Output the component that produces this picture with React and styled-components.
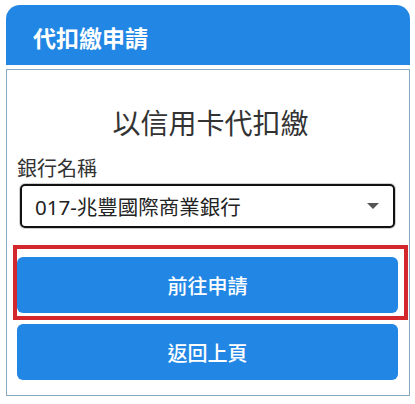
import React from "react";
import styled, { createGlobalStyle } from "styled-components";

const GlobalStyle = createGlobalStyle`
  html, body {
    margin: 0;
    padding: 0;
    background: #ffffff;
  }
  body {
    font-family: "Noto Sans", "Noto Sans CJK TC", sans-serif;
  }
`;

const Page = styled.div`
  padding: 5px 5px 8px 6px;
  width: 404px;
`;

const PanelHeader = styled.div`
  height: 60px;
  background: #2287e4;
  border-radius: 14px 14px 0 0;
  display: flex;
  align-items: center;
  padding-left: 27px;
  margin-bottom: 4px;
`;

const PanelTitle = styled.h1`
  margin: 0;
  padding-top: 3px;
  font-size: 23px;
  font-weight: 700;
  color: #ffffff;
`;

const PanelBody = styled.div`
  border: 1px solid #86a9c2;
  padding: 33px 1px 15px 6px;
  display: flex;
  flex-direction: column;
`;

const Heading = styled.h2`
  margin: 0 0 12px;
  font-size: 28px;
  line-height: 40px;
  font-weight: 400;
  color: #333333;
  text-align: center;
`;

const FieldLabel = styled.label`
  font-size: 20px;
  line-height: 28px;
  color: #333333;
  padding-left: 4px;
`;

const SelectBox = styled.div`
  margin: 1px 0 0 7px;
  width: 375px;
  height: 44px;
  box-sizing: border-box;
  border: 2px solid #111111;
  border-radius: 5px;
  box-shadow: 0 0 0 1px #cfcfcf;
  display: flex;
  align-items: center;
  justify-content: space-between;
  padding: 0 14px 0 13px;
  font-size: 20.5px;
  color: #222222;
`;

const Caret = styled.span`
  width: 0;
  height: 0;
  border-left: 6px solid transparent;
  border-right: 6px solid transparent;
  border-top: 6px solid #555555;
`;

const Highlight = styled.div`
  margin-top: 17px;
  width: 395px;
  box-sizing: border-box;
  border: 4px solid #d3262d;
  padding: 8px 6px 3px 0;
`;

const ActionButton = styled.button`
  display: block;
  width: 381px;
  height: 56px;
  margin: ${(props) => (props.$spaced ? "4px 0 0 4px" : "0")};
  border: none;
  border-radius: 6px;
  background: #2287e4;
  color: #ffffff;
  font-family: inherit;
  font-size: 20px;
  font-weight: 500;
  cursor: pointer;
`;

const App = () => {
  return (
    <>
      <GlobalStyle />
      <Page>
        <PanelHeader>
          <PanelTitle>代扣繳申請</PanelTitle>
        </PanelHeader>
        <PanelBody>
          <Heading>以信用卡代扣繳</Heading>
          <FieldLabel>銀行名稱</FieldLabel>
          <SelectBox>
            <span>017-兆豐國際商業銀行</span>
            <Caret />
          </SelectBox>
          <Highlight>
            <ActionButton>前往申請</ActionButton>
          </Highlight>
          <ActionButton $spaced>返回上頁</ActionButton>
        </PanelBody>
      </Page>
    </>
  );
};

export default App;
